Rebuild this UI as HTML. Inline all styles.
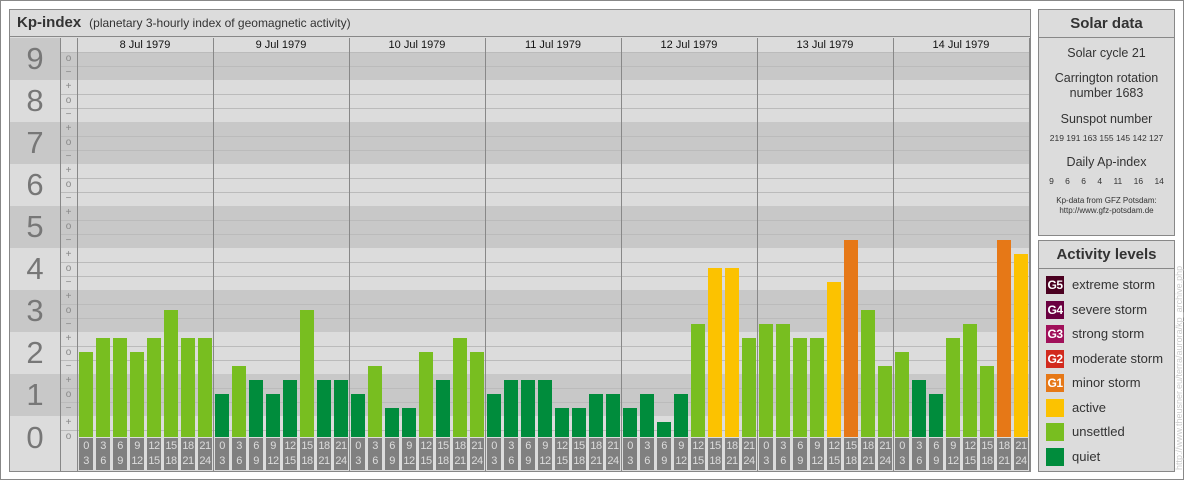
<!DOCTYPE html>
<html><head><meta charset="utf-8">
<style>
*{margin:0;padding:0;box-sizing:border-box}
body{width:1184px;height:480px;background:#fff;font-family:"Liberation Sans",sans-serif;position:relative;overflow:hidden}
.frame{position:absolute;left:0;top:0;width:1184px;height:480px;border:1px solid #888}
.abs{position:absolute}
#main{left:9px;top:9px;width:1022px;height:463px;border:1px solid #888;background:#dcdcdc}
.panel{position:absolute;border:1px solid #888;background:#dcdcdc;text-align:center;color:#333}
.ptitle{height:28px;border-bottom:1px solid #888;font-weight:bold;font-size:15px;line-height:28px;color:#333}
</style></head><body>
<div class="frame"></div>
<div id="main" class="abs">
 <div class="abs" style="left:0;top:0;width:1020px;height:27px;border-bottom:1px solid #888;line-height:26px;padding-left:7px;color:#333">
  <b style="font-size:15px">Kp-index</b><span style="font-size:12px;margin-left:8px">(planetary 3-hourly index of geomagnetic activity)</span></div>
</div>
<div id="chart"></div>
<div class="panel" style="left:1038px;top:9px;width:137px;height:227px">
 <div class="ptitle">Solar data</div>
 <div style="font-size:12.5px;margin-top:8px">Solar cycle 21</div>
 <div style="font-size:12.5px;margin-top:11px;line-height:15px">Carrington rotation<br>number 1683</div>
 <div style="font-size:12.5px;margin-top:11px">Sunspot number</div>
 <div style="font-size:8.5px;margin-top:7px;word-spacing:0px">219 191 163 155 145 142 127</div>
 <div style="font-size:12.5px;margin-top:12px">Daily Ap-index</div>
 <div style="font-size:8.5px;margin-top:7px;word-spacing:9px">9 6 6 4 11 16 14</div>
 <div style="font-size:8px;margin-top:10px;line-height:10px">Kp-data from GFZ Potsdam:<br>http://www.gfz-potsdam.de</div>
</div>
<div class="panel" style="left:1038px;top:240px;width:137px;height:232px;text-align:left">
 <div class="ptitle" style="text-align:center">Activity levels</div>
 <div id="leg"></div>
</div>
<div class="abs" style="left:1174px;top:470px;transform:rotate(-90deg);transform-origin:0 0;font-size:9px;color:#ccc;white-space:nowrap;width:230px">http://www.theusner.eu/terra/aurora/kp_archive.php</div>
<script>
(function(){
var h='';
var C=document.getElementById('chart');
for(var k=9;k>=0;k--){
 var tp=k==9?38:80+(8-k)*42, bt=k==0?471:80+(9-k)*42;
 var col=(k%2==1)?'#c8c8c8':'#dcdcdc';
 h+='<div class="abs" style="left:10px;top:'+tp+'px;width:1020px;height:'+(bt-tp)+'px;background:'+col+'"></div>';
 h+='<div class="abs" style="left:10px;top:'+tp+'px;width:50px;height:'+(k==0?44:42)+'px;font-size:31px;color:#777;text-align:center;line-height:'+(k==0?44:42)+'px">'+k+'</div>';
}
h+='<div class="abs" style="left:60px;top:38px;width:970px;height:14px;background:#dcdcdc"></div>';
for(var y=52;y<=430;y+=14){ if((y-80)%42==0) continue; h+='<div class="abs" style="left:60px;top:'+y+'px;width:970px;height:1px;background:#bbb"></div>';}
var subs=[];for(var k=9;k>=0;k--){if(k<9)subs.push('+');subs.push('o');if(k>0)subs.push('−');}
for(var i=0;i<subs.length;i++){h+='<div class="abs" style="left:60px;top:'+(52+i*14)+'px;width:17px;height:14px;font-size:10px;color:#888;text-align:center;line-height:13px">'+subs[i]+'</div>';}
h+='<div class="abs" style="left:60px;top:38px;width:1px;height:433px;background:#888"></div>';
h+='<div class="abs" style="left:77px;top:38px;width:1px;height:433px;background:#888"></div>';
var dates=['8 Jul 1979','9 Jul 1979','10 Jul 1979','11 Jul 1979','12 Jul 1979','13 Jul 1979','14 Jul 1979'];
var tops=[[352,338,338,352,338,310,338,338],[394,366,380,394,380,310,380,380],[394,366,408,408,352,380,338,352],[394,380,380,380,408,408,394,394],[408,394,422,394,324,268,268,338],[324,324,338,338,282,240,310,366],[352,380,394,338,324,366,240,254]];
var tl=[['0','3'],['3','6'],['6','9'],['9','12'],['12','15'],['15','18'],['18','21'],['21','24']];
for(var d=0;d<7;d++){
 var x0=77+d*136;
 h+='<div class="abs" style="left:'+x0+'px;top:38px;width:136px;height:14px;font-size:11px;color:#111;text-align:center;line-height:14px">'+dates[d]+'</div>';
 if(d>0)h+='<div class="abs" style="left:'+x0+'px;top:38px;width:1px;height:433px;background:#888"></div>';
 for(var i=0;i<8;i++){
  var t=tops[d][i],x=x0+2+i*17;
  var c=t>=373?'#008c3c':(t>=290?'#78be20':(t>=250?'#fcc200':'#e67817'));
  h+='<div class="abs" style="left:'+x+'px;top:'+t+'px;width:14px;height:'+(437-t)+'px;background:'+c+'"></div>';
  h+='<div class="abs" style="left:'+x+'px;top:438px;width:14px;height:32px;background:#808080;color:#ddd;font-size:11px;line-height:15px;text-align:center;padding-top:1px;letter-spacing:-0.5px">'+tl[i][0]+'<br>'+tl[i][1]+'</div>';
 }
}
h+='<div class="abs" style="left:1029px;top:38px;width:1px;height:433px;background:#888"></div>';
C.innerHTML=h;
var L=[['#4a0020','G5','extreme storm'],['#6a0040','G4','severe storm'],['#a0105a','G3','strong storm'],['#d22a1e','G2','moderate storm'],['#e67817','G1','minor storm'],['#fcc200','','active'],['#78be20','','unsettled'],['#008c3c','','quiet']];
var g='';
for(var i=0;i<L.length;i++){
 g+='<div class="abs" style="left:7px;top:'+(35+i*24.5)+'px;width:18px;height:18px;background:'+L[i][0]+';color:#fff;font-size:12px;font-weight:bold;line-height:18px;text-align:center;letter-spacing:-0.5px">'+L[i][1]+'</div>';
 g+='<div class="abs" style="left:33px;top:'+(35+i*24.5)+'px;font-size:13px;color:#333;line-height:18px;white-space:nowrap">'+L[i][2]+'</div>';
}
document.getElementById('leg').innerHTML=g;
})();
</script>
</body></html>
